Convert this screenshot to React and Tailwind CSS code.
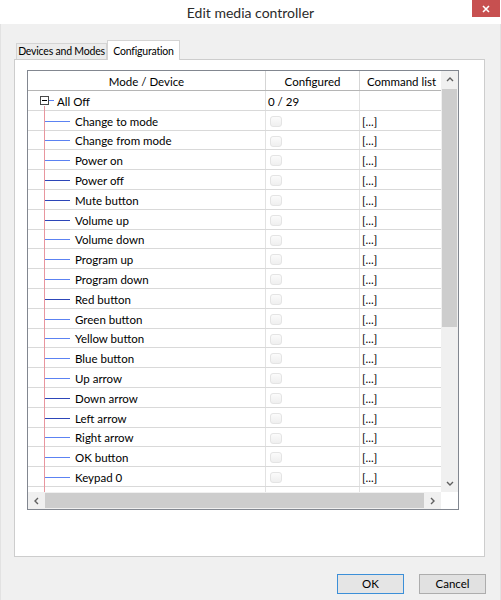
import React from "react";

const children = [
  ["Change to mode", false],
  ["Change from mode", false],
  ["Power on", false],
  ["Power off", true],
  ["Mute button", true],
  ["Volume up", true],
  ["Volume down", false],
  ["Program up", false],
  ["Program down", false],
  ["Red button", true],
  ["Green button", false],
  ["Yellow button", false],
  ["Blue button", false],
  ["Up arrow", false],
  ["Down arrow", true],
  ["Left arrow", true],
  ["Right arrow", false],
  ["OK button", false],
  ["Keypad 0", false],
  ["", false],
];

function Checkbox() {
  return (
    <div className="w-[12px] h-[11px] rounded-[3px] border border-[#e4e4e4] bg-gradient-to-b from-[#fbfbfb] to-[#efefef]" />
  );
}

function ChildRow({ label, dark }) {
  return (
    <div className="flex h-[19.8px] shrink-0 border-b border-[#d9d9d9]">
      <div className="w-[238px] shrink-0 flex items-center pt-[2px] border-r border-[#e2e2e2]">
        <div className="w-[17px] shrink-0" />
        <div className={"w-[25px] h-[1px] shrink-0 " + (dark ? "bg-[#2d46b8]" : "bg-[#5c82f2]")} />
        <span className="ml-[5px] whitespace-nowrap">{label}</span>
      </div>
      <div className="w-[94px] shrink-0 flex items-start pt-[5px] pl-[4px] border-r border-[#e2e2e2]">
        <Checkbox />
      </div>
      <div className="flex-1 flex items-center pt-[2px] pl-[2px] whitespace-nowrap">{label ? "[...]" : ""}</div>
    </div>
  );
}

function Chevron({ dir }) {
  const d = {
    up: "M1 5 L4 2 L7 5",
    down: "M1 2 L4 5 L7 2",
    left: "M5 1 L2 4 L5 7",
    right: "M2 1 L5 4 L2 7",
  }[dir];
  return (
    <svg width="8" height="8" viewBox="0 0 8 8">
      <path d={d} fill="none" stroke="#606060" strokeWidth="1.4" />
    </svg>
  );
}

export default function App() {
  return (
    <div
      className="w-[501px] h-[600px] flex flex-col bg-[#f0f0f0] text-[11.5px] text-black overflow-hidden"
      style={{ fontFamily: "Lato, 'Noto Sans', sans-serif" }}
    >
      {/* title bar */}
      <div className="relative h-[24px] shrink-0 bg-white flex items-center justify-center">
        <span className="text-[14px] text-[#2b2b2b]">Edit media controller</span>
        <div className="absolute right-[1px] top-0 w-[28px] h-[17px] bg-[#c75050] flex items-center justify-center">
          <svg width="8" height="8" viewBox="0 0 8 8">
            <path d="M1 1 L7 7 M7 1 L1 7" stroke="white" strokeWidth="1.6" />
          </svg>
        </div>
      </div>

      <div className="flex-1 flex flex-col border-l border-r border-[#e2e2e2]">
        {/* tabs */}
        <div className="h-[35px] flex items-end pl-[15px] shrink-0">
          <div className="h-[16px] w-[91px] border border-b-0 border-[#d4d4d4] bg-[#ececec] flex items-center justify-center pt-[1px] text-[10.5px] tracking-[-0.2px] whitespace-nowrap">
            Devices and Modes
          </div>
          <div className="relative z-10 -mb-[1px] h-[20px] w-[73px] border border-b-0 border-[#d4d4d4] bg-white flex items-start pt-[3px] justify-center text-[10.5px] tracking-[-0.2px] whitespace-nowrap">
            Configuration
          </div>
        </div>

        {/* panel */}
        <div className="ml-[13px] w-[471px] h-[498px] shrink-0 border border-[#cdcdcd] bg-white pl-[12px] pt-[10px]">
          <div className="w-[432px] h-[440px] border border-[#828790] flex flex-col">
            <div className="flex h-[421px]">
              {/* list content */}
              <div className="relative w-[413px] overflow-hidden flex flex-col">
                <div className="flex h-[20px] shrink-0 border-b border-[#b5b5b5]">
                  <div className="w-[238px] shrink-0 flex items-center justify-center pt-[2px] border-r border-[#d5d5d5]">
                    Mode / Device
                  </div>
                  <div className="w-[94px] shrink-0 flex items-center justify-center pt-[2px] border-r border-[#d5d5d5]">
                    Configured
                  </div>
                  <div className="w-[83px] shrink-0 flex items-center justify-center pt-[2px] whitespace-nowrap">
                    Command list
                  </div>
                </div>

                <div className="flex h-[19.8px] shrink-0 border-b border-[#d9d9d9]">
                  <div className="w-[238px] shrink-0 flex items-center pt-[1px] border-r border-[#e2e2e2]">
                    <div className="ml-[12px] w-[9px] h-[9px] border border-[#4a4a4a] flex items-center justify-center shrink-0">
                      <div className="w-[5px] h-[1px] bg-black" />
                    </div>
                    <div className="w-[5px] h-[1px] bg-[#5c82f2]" />
                    <span className="ml-[3px] pt-[1px]">All Off</span>
                  </div>
                  <div className="w-[94px] shrink-0 flex items-center pt-[2px] pl-[2px] border-r border-[#e2e2e2]">
                    0 / 29
                  </div>
                  <div className="flex-1" />
                </div>

                {children.map(([label, dark], i) => (
                  <ChildRow key={i} label={label} dark={dark} />
                ))}

                {/* tree trunk */}
                <div className="absolute left-[16px] top-[35px] bottom-0 w-[1px] bg-[#e8969e]" />
              </div>

              {/* vertical scrollbar */}
              <div className="w-[17px] shrink-0 bg-[#f0f0f0] flex flex-col">
                <div className="h-[17px] flex items-center justify-center shrink-0">
                  <Chevron dir="up" />
                </div>
                <div className="flex-1 pt-[1px] px-[1px]">
                  <div className="h-[238px] bg-[#cdcdcd]" />
                </div>
                <div className="h-[17px] flex items-center justify-center shrink-0">
                  <Chevron dir="down" />
                </div>
              </div>
            </div>

            {/* horizontal scrollbar */}
            <div className="flex h-[17px]">
              <div className="w-[413px] bg-[#f0f0f0] flex items-stretch">
                <div className="w-[17px] flex items-center justify-center shrink-0">
                  <Chevron dir="left" />
                </div>
                <div className="flex-1 py-[1px]">
                  <div className="w-[379px] h-full bg-[#cdcdcd]" />
                </div>
                <div className="w-[17px] flex items-center justify-center shrink-0">
                  <Chevron dir="right" />
                </div>
              </div>
              <div className="w-[17px] bg-white" />
            </div>
          </div>
        </div>

        {/* buttons */}
        <div className="flex justify-end gap-[15px] pr-[14px] pt-[17px]">
          <button className="w-[67px] h-[20px] border border-[#3c8fd8] bg-[#e5e5e5] text-[11.5px] leading-none">
            OK
          </button>
          <button className="w-[67px] h-[20px] border border-[#adadad] bg-[#e1e1e1] text-[11.5px] leading-none">
            Cancel
          </button>
        </div>
      </div>
    </div>
  );
}
